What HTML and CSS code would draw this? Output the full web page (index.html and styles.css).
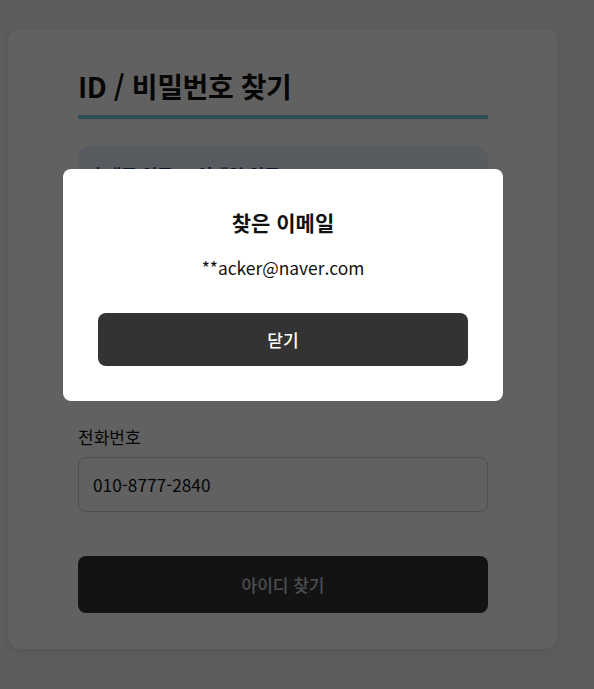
FILE: index.html
```html
<!DOCTYPE html>
<html lang="ko">
<head>
<meta charset="utf-8">
<title>ID / 비밀번호 찾기</title>
<link rel="stylesheet" href="styles.css">
</head>
<body>
<main class="card">
  <h1 class="title">ID / 비밀번호 찾기</h1>
  <div class="tabs">
    <div class="tab-row">
      <span class="tab active">휴대폰 인증</span>
      <span class="tab">이메일 인증</span>
    </div>
  </div>
  <div class="field">
    <label class="label">이름</label>
    <div class="input">홍길동</div>
  </div>
  <div class="field">
    <label class="label">전화번호</label>
    <div class="input">010-8777-2840</div>
  </div>
  <button class="submit">아이디 찾기</button>
</main>
<div class="overlay">
  <div class="modal">
    <h2 class="modal-title">찾은 이메일</h2>
    <p class="modal-text">**acker@naver.com</p>
    <button class="modal-btn">닫기</button>
  </div>
</div>
</body>
</html>
```

FILE: styles.css
```css
* { box-sizing: border-box; }
html, body { margin: 0; }
body {
  background: #f3f3f3;
  font-family: "Noto Sans CJK KR", "Noto Sans", sans-serif;
  color: #111;
  padding: 29px 37px 40px 8px;
  min-height: 689px;
}
.card {
  width: 549px;
  background: #fff;
  border-radius: 12px;
  box-shadow: 0 2px 8px rgba(0,0,0,0.08);
  padding: 37px 69px 36px 70px;
  display: flex;
  flex-direction: column;
}
.title {
  margin: 0;
  font-size: 28px;
  line-height: 40px;
  font-weight: 700;
  letter-spacing: -0.4px;
  padding-bottom: 9px;
  border-bottom: 4px solid #76d0d6;
}
.tabs {
  margin-top: 27px;
  background: #e6eefa;
  border-radius: 12px;
  height: 138px;
  padding: 17px 12px;
}
.tab-row { display: flex; gap: 24px; }
.tab { font-size: 17px; line-height: 24px; color: #1a3a7a; font-weight: 700; }
.field {
  margin-top: 28px;
  display: flex;
  flex-direction: column;
  gap: 9px;
}
.label { font-size: 17px; line-height: 22px; }
.input {
  height: 55px;
  border: 1px solid #cfcfcf;
  border-radius: 8px;
  padding: 0 14px;
  display: flex;
  align-items: center;
  font-size: 17.3px;
}
.submit {
  margin-top: 44px;
  height: 57px;
  border: none;
  border-radius: 8px;
  background: #333;
  color: #c4ccd4;
  font-family: inherit;
  font-size: 17px;
  font-weight: 500;
}
.overlay {
  position: fixed;
  inset: 0;
  background: rgba(0,0,0,0.62);
}
.modal {
  position: absolute;
  left: 63px;
  top: 169px;
  width: 440px;
  background: #fff;
  border-radius: 8px;
  padding: 35px;
  display: flex;
  flex-direction: column;
  align-items: stretch;
  text-align: center;
}
.modal-title {
  margin: 0;
  font-size: 21px;
  line-height: 36px;
  font-weight: 700;
}
.modal-text {
  margin: 16px 0 0;
  font-size: 17.4px;
  line-height: 24px;
}
.modal-btn {
  margin-top: 33px;
  height: 53px;
  border: none;
  border-radius: 8px;
  background: #333;
  color: #fff;
  font-family: inherit;
  font-size: 17px;
  font-weight: 500;
}
```
